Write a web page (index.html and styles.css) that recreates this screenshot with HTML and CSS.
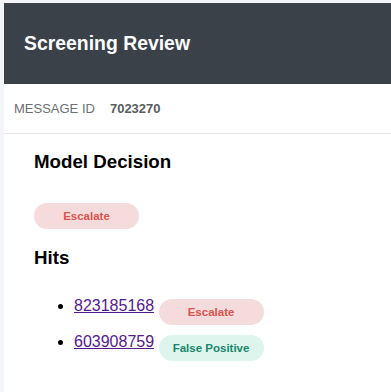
FILE: index.html
```html
<!DOCTYPE html>
<html>
<head>
<meta charset="utf-8">
<title>Screening Review</title>
<link rel="stylesheet" href="styles.css">
</head>
<body>
<div class="card">
  <header class="topbar"><h1 class="title">Screening Review</h1></header>
  <div class="meta"><span class="meta-label">Message ID</span><span class="meta-value">7023270</span></div>
  <section class="content">
    <h3 class="section-title">Model Decision</h3>
    <div class="decision"><span class="badge badge-escalate">Escalate</span></div>
    <h3 class="section-title hits-title">Hits</h3>
    <ul class="hits">
      <li class="hit"><a class="hit-link" href="#823185168">823185168</a> <span class="badge badge-escalate inline">Escalate</span></li>
      <li class="hit"><a class="hit-link" href="#603908759">603908759</a> <span class="badge badge-fp inline">False Positive</span></li>
    </ul>
  </section>
</div>
</body>
</html>
```

FILE: styles.css
```css
html { overflow: hidden; }
body {
  margin: 0;
  padding: 3px 0 0 4px;
  background: #f3f5f8;
  font-family: "Liberation Sans", Arial, sans-serif;
  min-height: 392px;
  box-sizing: border-box;
}
.card {
  background: #ffffff;
  min-height: 389px;
}
.topbar {
  height: 81px;
  background: #3a4149;
  display: flex;
  align-items: center;
  padding: 0 20px;
  box-sizing: border-box;
}
.title {
  margin: 0;
  color: #ffffff;
  font-size: 19.4px;
  font-weight: bold;
}
.meta {
  height: 49px;
  border-bottom: 1px solid #e6e7ea;
  display: flex;
  align-items: center;
  padding-left: 10px;
  font-size: 13px;
}
.meta-label {
  color: #6c6f73;
  text-transform: uppercase;
}
.meta-value {
  margin-left: 15px;
  color: #595c60;
  font-weight: bold;
}
.content {
  padding: 0 30px;
}
.section-title {
  margin: 17px 0 0;
  font-size: 18.72px;
  line-height: 22px;
  font-weight: bold;
  color: #000;
}
.decision {
  display: flex;
  margin-top: 30px;
}
.hits-title {
  margin-top: 18px;
}
.badge {
  display: inline-block;
  width: 105px;
  height: 26px;
  line-height: 26px;
  border-radius: 13px;
  text-align: center;
  font-size: 11.5px;
  font-weight: bold;
}
.badge.inline {
  vertical-align: -5px;
}
.badge-escalate {
  background: #f6dbdc;
  color: #d9534f;
}
.badge-fp {
  background: #ddf5ec;
  color: #17876a;
}
.hits {
  margin: 28px 0 0;
  padding-left: 40px;
  font-size: 16px;
}
.hit {
  margin-bottom: 8px;
}
.hit-link {
  color: #551a8b;
}
```
